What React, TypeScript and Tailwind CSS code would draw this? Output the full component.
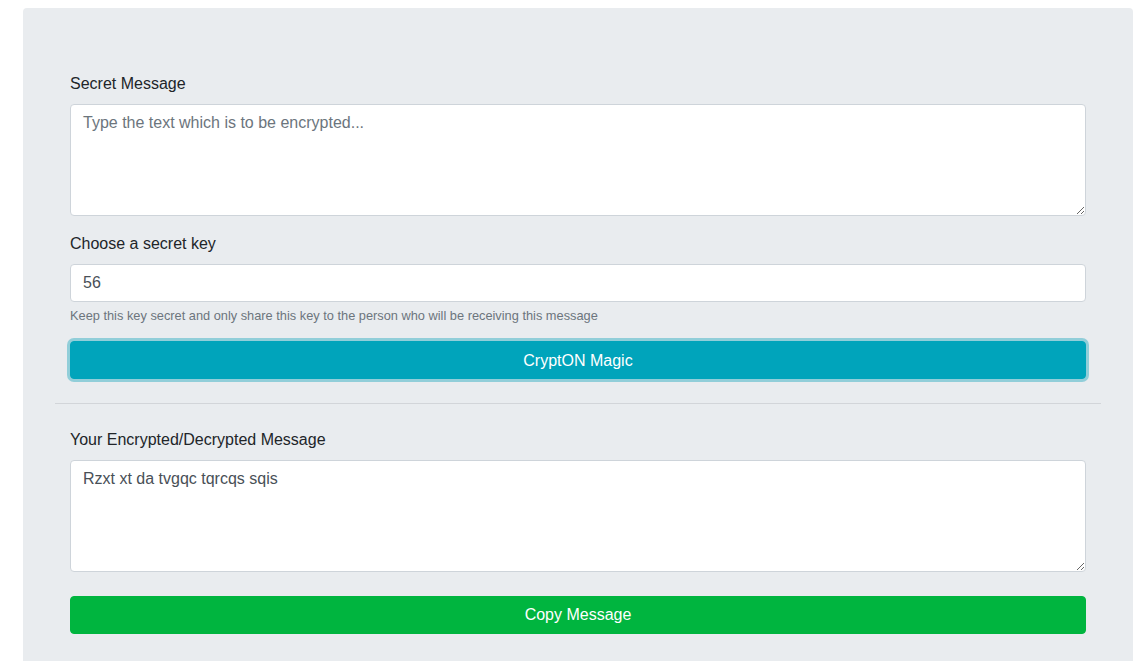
const fieldBox =
  "block w-full rounded-[4px] border border-[#ced4da] bg-white px-3 py-1.5 text-base leading-6 text-[#495057] placeholder:text-[#6c757d] outline-none";

const App = () => {
  return (
    <div
      className="min-h-[661px] bg-white text-[#212529]"
      style={{ fontFamily: '"Liberation Sans", Arial, sans-serif' }}
    >
      <div className="ml-[23px] mt-2 w-[1110px] rounded-[4px] bg-[#e9ecef] px-8 pt-16 pb-8">
        <div className="px-[15px]">
          <label className="mb-2 block text-base leading-6">Secret Message</label>
          <textarea
            rows={4}
            className={fieldBox + " h-[112px] resize-y"}
            placeholder="Type the text which is to be encrypted..."
          />

          <label className="mt-4 mb-2 block text-base leading-6">Choose a secret key</label>
          <input type="text" defaultValue="56" className={fieldBox + " h-[38px]"} />
          <p className="mt-1 text-[12.8px] leading-[19.2px] text-[#6c757d]">
            Keep this key secret and only share this key to the person who will be receiving this
            message
          </p>

          <button className="mt-4 block w-full rounded-[4px] border border-[#00a4bb] bg-[#00a4bb] px-3 pt-[7px] pb-[5px] text-base leading-6 text-white shadow-[0_0_0_3px_rgba(58,176,195,0.5)]">
            CryptON Magic
          </button>
        </div>

        <hr className="mt-6 mb-6 border-0 border-t border-[#d2d5d9]" />

        <div className="px-[15px]">
          <label className="mb-2 block text-base leading-6">Your Encrypted/Decrypted Message</label>
          <textarea
            rows={4}
            className={fieldBox + " h-[112px] resize-y"}
            defaultValue="Rzxt xt da tvgqc tqrcqs sqis"
          />

          <button className="mt-6 block w-full rounded-[4px] border border-[#00b53f] bg-[#00b53f] px-3 py-1.5 text-base leading-6 text-white">
            Copy Message
          </button>
        </div>
      </div>
    </div>
  );
};

export default App;
